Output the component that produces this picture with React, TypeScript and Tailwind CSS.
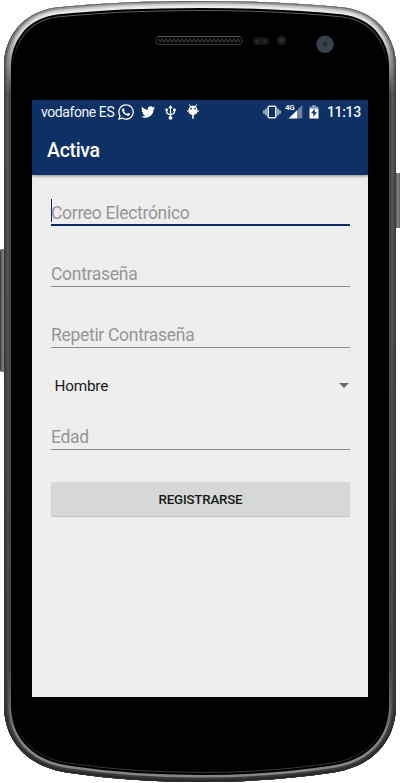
import React from "react";
import { FaWhatsapp, FaTwitter } from "react-icons/fa";

const BODY =
  "M4 66C4 38 22 12 56 7.5C100 3 150 1 200 1C250 1 300 3 344 7.5C378 12 396 38 396 66V705C396 738 376 767 330 773C290 779 245 782 200 782C155 782 110 779 70 773C24 767 4 738 4 705Z";

function PhoneBody() {
  return (
    <svg className="absolute inset-0" width="400" height="783" viewBox="0 0 400 783">
      <defs>
        <clipPath id="body"><path d={BODY} /></clipPath>
        <linearGradient id="outer" x1="0" y1="0" x2="0" y2="1">
          <stop offset="0" stopColor="#a0a0a0" />
          <stop offset=".06" stopColor="#6b6b6b" />
          <stop offset=".12" stopColor="#484848" />
          <stop offset=".9" stopColor="#343434" />
          <stop offset="1" stopColor="#292929" />
        </linearGradient>
        <linearGradient id="mid" x1="0" y1="0" x2="0" y2="1">
          <stop offset="0" stopColor="#d8d8d8" />
          <stop offset=".06" stopColor="#999999" />
          <stop offset=".12" stopColor="#585858" />
          <stop offset=".9" stopColor="#444444" />
          <stop offset="1" stopColor="#3a3a3a" />
        </linearGradient>
        <linearGradient id="inner" x1="0" y1="0" x2="0" y2="1">
          <stop offset="0" stopColor="#f0f0f0" />
          <stop offset=".05" stopColor="#cfcfcf" />
          <stop offset=".12" stopColor="#454545" />
          <stop offset=".86" stopColor="#484848" />
          <stop offset=".95" stopColor="#858585" />
          <stop offset="1" stopColor="#858585" />
        </linearGradient>
        <linearGradient id="rim" x1="0" y1="0" x2="0" y2="1">
          <stop offset="0" stopColor="#666" />
          <stop offset=".05" stopColor="#444" />
          <stop offset=".08" stopColor="#000" />
          <stop offset=".92" stopColor="#000" />
          <stop offset="1" stopColor="#444" />
        </linearGradient>
        <linearGradient id="key" x1="0" y1="0" x2="1" y2="0">
          <stop offset="0" stopColor="#333" />
          <stop offset=".5" stopColor="#888" />
          <stop offset="1" stopColor="#333" />
        </linearGradient>
        <pattern id="mesh" x="158" y="38" width="4" height="5" patternUnits="userSpaceOnUse">
          <path d="M0 1L2 4L4 1" stroke="#3a3a3a" fill="none" />
        </pattern>
      </defs>
      <rect x="0" y="249" width="6" height="123" rx="2" fill="url(#key)" />
      <rect x="394" y="173" width="8" height="55" rx="2" fill="url(#key)" />
      <g clipPath="url(#body)">
        <path d={BODY} fill="#000" stroke="url(#rim)" strokeWidth="20" />
        <path d={BODY} fill="none" stroke="#000" strokeWidth="18" />
        <path d={BODY} fill="none" stroke="url(#inner)" strokeWidth="14" />
        <path d={BODY} fill="none" stroke="url(#mid)" strokeWidth="9" />
        <path d={BODY} fill="none" stroke="url(#outer)" strokeWidth="5" />
        <path d={BODY} fill="none" stroke="#333" strokeOpacity=".6" strokeWidth="1.5" />
      </g>
      <rect x="155.8" y="36.5" width="86.5" height="8" rx="3" fill="#0b0b0b" stroke="#343434" />
      <path d="M158 36.5H240" stroke="#5b5b5b" />
      <rect x="158" y="38" width="82" height="5" fill="url(#mesh)" />
      <rect x="253.3" y="37.5" width="15.5" height="7.5" rx="3.7" fill="#1b1b1b" />
      <circle cx="257.5" cy="41.2" r="1.6" fill="#292929" />
      <circle cx="264.5" cy="41.2" r="1.6" fill="#292929" />
      <circle cx="281.5" cy="40.3" r="4.8" fill="#1b1b1b" />
      <circle cx="281.5" cy="40.3" r="2" fill="#303030" />
      <circle cx="325" cy="44.3" r="8.7" fill="#39424c" />
      <circle cx="325" cy="44" r="3.2" fill="#252c34" stroke="#48515b" strokeWidth=".6" />
    </svg>
  );
}

function UsbIcon() {
  return (
    <svg className="ml-[10px] shrink-0" width="11" height="15" viewBox="0 0 11 15" fill="none" stroke="#fff" strokeWidth="1.3">
      <path d="M5.5 2V12M1.6 5V7.2Q1.6 8.8 5.5 9.8Q9.4 8.8 9.4 7.2V5" />
      <path d="M5.5 0L7.7 3.2H3.3Z" fill="#fff" stroke="none" />
      <circle cx="5.5" cy="12.8" r="1.9" fill="#fff" stroke="none" />
      <circle cx="1.6" cy="4.8" r="1.4" fill="#fff" stroke="none" />
      <path d="M8.1 3.6H10.7V6.2H8.1Z" fill="#fff" stroke="none" />
    </svg>
  );
}

function AndroidBug() {
  return (
    <svg className="ml-[11px] shrink-0" width="12" height="16" viewBox="0 0 12 16" fill="#fff">
      <path d="M1.5 6.3C1.5 4.4 2.2 3.2 3.2 2.4L1.9.8L2.6.2L4.1 1.9Q6 1.3 7.9 1.9L9.4.2L10.1.8L8.8 2.4C9.8 3.2 10.5 4.4 10.5 6.3V7C10.5 9.2 8.8 10.8 6.8 11V14.8H5.2V11C3.2 10.8 1.5 9.2 1.5 7Z" />
      <circle cx="4" cy="4.6" r=".9" fill="#0d3065" />
      <circle cx="8" cy="4.6" r=".9" fill="#0d3065" />
      <path d="M.9 6V8.2M11.1 6V8.2" stroke="#fff" strokeWidth=".9" />
    </svg>
  );
}

function StatusBar() {
  return (
    <div className="flex h-6 items-center pl-[9px] pr-[7px] text-[14px] text-[#f2f5f9]">
      <span className="w-[76px] whitespace-nowrap text-[14px] leading-none tracking-[-0.42px]">vodafone ES</span>
      <FaWhatsapp className="shrink-0 -mt-px text-white" size={18} />
      <FaTwitter className="ml-[6px] -mt-px shrink-0 text-white" size={14} />
      <UsbIcon />
      <AndroidBug />
      <svg className="ml-auto shrink-0" width="18" height="14" viewBox="0 0 18 14" fill="none" stroke="#e9edf4">
        <rect x="5.2" y="1.2" width="7.6" height="11.6" rx="1" strokeWidth="1.6" />
        <path d="M3 3.5V10.5M15 3.5V10.5" strokeWidth="1.2" />
        <path d="M1 5.2V8.8M17 5.2V8.8" strokeWidth="1.2" />
      </svg>
      <div className="relative ml-[4px] h-4 w-[18px] shrink-0">
        <span className="absolute left-0 top-0 text-[8px] font-bold leading-none tracking-[-0.4px]">4G</span>
        <svg width="18" height="16" viewBox="0 0 18 16">
          <path d="M17.3 1V14.5H12V6.3Z" fill="#6e83a3" />
          <path d="M12 6.3V14.5H3.5Z" fill="#fff" />
        </svg>
      </div>
      <svg className="ml-[6px] shrink-0" width="10" height="14" viewBox="0 0 10 14">
        <path d="M0.5 3.5V1.8H3V.3H7V1.8H9.5V3.5Z" fill="#8c9cb5" />
        <path d="M.5 3.5H9.5V13.5H.5Z" fill="#fff" />
        <path d="M5.8 3.8L2 8.2H4.4V12L8 7.2H5.8Z" fill="#0d3065" />
      </svg>
      <span className="ml-[8px] w-[34px] whitespace-nowrap text-[14px] font-medium leading-none tracking-[-0.35px]">11:13</span>
    </div>
  );
}

function Field({ label, focused = false, spacing }: { label: string; focused?: boolean; spacing: string }) {
  return (
    <div className={`flex h-[27px] items-start ${spacing} ${focused ? "border-b-2 border-[#0b2d63]" : "border-b border-[#8c8c8c]"}`}>
      <div className={`flex h-[23px] items-center whitespace-nowrap text-[17.5px] leading-none tracking-[-0.3px] text-[#969696] ${focused ? "-mr-px border-l border-l-[#0b2d63]" : ""}`}>
        <span className={focused ? "-ml-px pt-[6px]" : "pt-[6px]"}>{label}</span>
      </div>
    </div>
  );
}

export default function App() {
  return (
    <div className="relative h-[783px] w-[400px] overflow-hidden bg-white pl-8 pt-[100px] font-['Roboto',sans-serif]">
      <PhoneBody />
      <main className="relative h-[597px] w-[336px] bg-[#eeeeee]">
        <header className="relative h-[75px] bg-[#0d3065] shadow-[0_1px_3px_rgba(0,0,0,0.45)]">
          <StatusBar />
          <h1 className="pl-[15px] pt-[15px] text-[19.5px] font-medium leading-[24px] tracking-[-0.3px] text-white">Activa</h1>
        </header>
        <form className="flex flex-col pl-[19px] pr-[18px]">
          <Field label="Correo Electrónico" focused spacing="mt-[24px]" />
          <Field label="Contraseña" spacing="mt-[34px]" />
          <Field label="Repetir Contraseña" spacing="mt-[34px]" />
          <div className="mt-[27px] flex h-[22px] items-center justify-between pl-[3.5px] text-[15.3px] leading-none tracking-[-0.2px] text-[#1b1b1b]">
            <span className="pt-[2px]">Hombre</span>
            <span className="mb-[2px] mr-px h-0 w-0 border-x-5 border-t-5 border-x-transparent border-t-[#6d6d6d]" />
          </div>
          <Field label="Edad" spacing="mt-[26px]" />
          <button type="button" className="mt-[32px] h-[34px] rounded-[2px] bg-[#d6d8d7] pt-[2px] text-[13.3px] font-medium tracking-[-0.2px] text-[#171717] shadow-[0_1px_1px_rgba(0,0,0,0.2)]">
            REGISTRARSE
          </button>
        </form>
      </main>
    </div>
  );
}
